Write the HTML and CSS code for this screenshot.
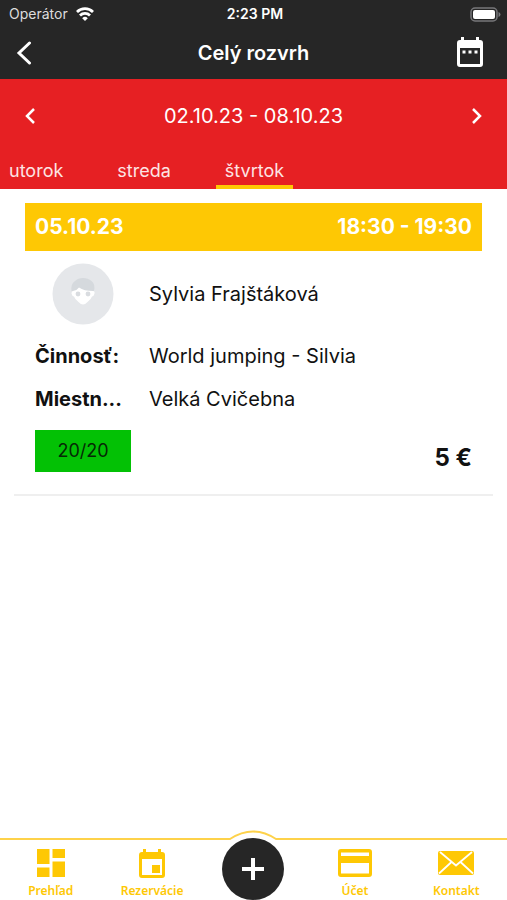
FILE: index.html
```html
<!DOCTYPE html>
<html lang="sk">
<head>
    <meta charset="UTF-8">
    <meta name="viewport" content="width=device-width, initial-scale=1.0">
    <title>Celý rozvrh</title>
    <link rel="stylesheet" href="styles.css">
</head>
<body>
    <!-- Status bar -->
    <div class="status-bar">
        <div class="carrier">
            <span>Operátor</span>
            <svg width="18" height="14" viewBox="0 0 18 14" fill="none" stroke="#fff" stroke-width="2.8">
                <path d="M1 4.9a11.5 11.5 0 0 1 16 0"/>
                <path d="M4 8.4a7.2 7.2 0 0 1 10 0"/>
                <path d="M9 14L6.2 11.2a4 4 0 0 1 5.6 0z" fill="#fff" stroke="none"/>
            </svg>
        </div>
        <span class="clock">2:23 PM</span>
        <svg class="battery" width="31" height="15" viewBox="0 0 31 15">
            <rect x="1" y="1" width="26" height="13" rx="4" fill="#262626" stroke="#77777a" stroke-width="1.5"/>
            <rect x="3" y="3" width="22" height="9" rx="2" fill="#fff"/>
            <path d="M28.5 5v5q2-.8 2-2.5t-2-2.5z" fill="#77777a"/>
        </svg>
    </div>

    <!-- Header -->
    <header class="header">
        <button class="icon-btn" aria-label="Späť">
            <svg width="16" height="24" viewBox="0 0 16 24" fill="none" stroke="#fff" stroke-width="3" stroke-linecap="round">
                <path d="M13.5 2L3 12l10.5 10"/>
            </svg>
        </button>
        <h1>Celý rozvrh</h1>
        <button class="icon-btn calendar-btn" aria-label="Kalendár">
            <svg width="28" height="31" viewBox="0 0 28 31">
                <path fill="#fff" fill-rule="evenodd" d="M5 0h3v3h12V0h3v3h1q3 0 3 3v21q0 3-3 3H4q-3 0-3-3V6q0-3 3-3h1zM4 11v16h20V11z"/>
                <path fill="#fff" d="M6.5 13.5h3v3h-3zM12.500 13.5h3v3h-3zM18.5 13.5h3v3h-3z"/>
            </svg>
        </button>
    </header>

    <!-- Week and day selection -->
    <section class="week">
        <div class="week-range">
            <button class="icon-btn" aria-label="Predchádzajúci týždeň">
                <svg width="12" height="18" viewBox="0 0 12 18" fill="none" stroke="#fff" stroke-width="2.5">
                    <path d="M10 2L3 9l7 7"/>
                </svg>
            </button>
            <span>02.10.23 - 08.10.23</span>
            <button class="icon-btn" aria-label="Nasledujúci týždeň">
                <svg width="12" height="18" viewBox="0 0 12 18" fill="none" stroke="#fff" stroke-width="2.5">
                    <path d="M2 2l7 7-7 7"/>
                </svg>
            </button>
        </div>
        <nav class="days">
            <a href="#utorok">utorok</a>
            <a href="#streda">streda</a>
            <a href="#stvrtok" class="active">štvrtok</a>
        </nav>
    </section>

    <!-- Lessons -->
    <main class="lessons">
        <article class="lesson">
            <div class="lesson-time">
                <span>05.10.23</span>
                <span>18:30 - 19:30</span>
            </div>
            <div class="lesson-info">
                <svg class="avatar" width="62" height="62" viewBox="0 0 62 62">
                    <circle cx="31" cy="31" r="30.5" fill="#e5e7ea"/>
                    <path d="M19.5 28q-1-7 3.5-10 3-3 8-3t8.5 3q4 3 2.5 10z" fill="#d5d9dd"/>
                    <path d="M21 28q4-.5 6-3.5 5 3.5 14 3.5 2 0 1.5 2.5-.5 2.5-2.5 3-1 3-4.5 5.5-2.5 2.5-4.5 2.5t-4.5-2.5q-3.500-2.5-4.5-5.5-2-.5-2.5-3 0-2.5 1.5-2.5z" fill="#fff"/>
                    <circle cx="26" cy="31" r="2.4" fill="#d9dce0"/>
                    <circle cx="36" cy="31" r="2.4" fill="#d9dce0"/>
                </svg>
                <span>Sylvia Frajštáková</span>
            </div>
            <div class="lesson-info">
                <strong>Činnosť:</strong>
                <span>World jumping - Silvia</span>
            </div>
            <div class="lesson-info">
                <strong>Miestn...</strong>
                <span>Velká Cvičebna</span>
            </div>
            <div class="lesson-footer">
                <span class="capacity">20/20</span>
                <strong class="price">5 €</strong>
            </div>
        </article>
    </main>

    <!-- Bottom navigation -->
    <nav class="bottom-nav">
        <a href="#prehlad">
            <svg width="28" height="28" viewBox="0 0 28 28" fill="#fec804">
                <path d="M0 0h12.5v15H0zM15.5 0H28v9H15.500zM0 18.5h12.5V28H0zM15.5 12.5H28V28H15.500z"/>
            </svg>
            <span>Prehľad</span>
        </a>
        <a href="#rezervacie">
            <svg width="28" height="30" viewBox="0 0 28 30" fill="#fec804">
                <path fill-rule="evenodd" d="M5 0h3v3h12V0h3v3h1q3 0 3 3v20q0 3-3 3H4q-3 0-3-3V6q0-3 3-3h1zM4 10v16h20V10z"/>
                <path d="M14 16h8v8h-8z"/>
            </svg>
            <span>Rezervácie</span>
        </a>
        <div class="add">
            <svg class="add-arc" width="62" height="12" viewBox="0 0 62 12">
                <path d="M4 12V9h4Q31-6 54 9h4v3z" fill="#fff"/>
                <path d="M0 9h8Q31-6 54 9h8" fill="none" stroke="#fed24a" stroke-width="2"/>
            </svg>
            <button class="add-btn" aria-label="Pridať">
                <svg width="24" height="24" viewBox="0 0 24 24" stroke="#fff" stroke-width="4">
                    <path d="M12 1v22M1 12h22"/>
                </svg>
            </button>
        </div>
        <a href="#ucet">
            <svg width="34" height="28" viewBox="0 0 34 28" fill="#fec804">
                <path fill-rule="evenodd" d="M3 0h28q3 0 3 3v22q0 3-3 3H3q-3 0-3-3V3q0-3 3-3zM3 3.5v3.5h28V3.5zM3 14v10.5h28V14z"/>
            </svg>
            <span>Účet</span>
        </a>
        <a href="#kontakt">
            <svg width="38" height="28" viewBox="0 0 38 28">
                <rect x="1" y="2" width="36" height="24" rx="2" fill="#fec804"/>
                <path d="M3 3l16 13.5L35 3M2 24.5l12.5-11.5M36 24.5L23.5 13" fill="none" stroke="#fff" stroke-width="1.8"/>
            </svg>
            <span>Kontakt</span>
        </a>
    </nav>
</body>
</html>
```
FILE: styles.css
```css
/* Global Styles */
* {
    box-sizing: border-box;
}

body {
    font-family: Inter, 'Liberation Sans', sans-serif;
    font-size: 20px;
    line-height: 24px;
    margin: 0;
    min-height: 100vh;
    display: flex;
    flex-direction: column;
    background-color: #fff;
    color: #111;
}

a {
    text-decoration: none;
}

svg {
    display: block;
}

.icon-btn {
    padding: 0;
    border: none;
    background: none;
    cursor: pointer;
}

/* Status bar */
.status-bar {
    display: grid;
    grid-template-columns: 1fr auto 1fr;
    align-items: center;
    height: 28px;
    padding: 0 6px 0 9px;
    background-color: #262626;
    color: #fff;
    font-size: 14px;
}

.carrier {
    display: flex;
    align-items: center;
    gap: 8px;
    color: #ddd;
}

.clock {
    font-weight: 600;
}

.battery {
    justify-self: end;
}

/* Header */
.header {
    display: grid;
    grid-template-columns: 1fr auto 1fr;
    align-items: center;
    height: 51px;
    padding: 0 16px 2px;
    background-color: #262626;
    color: #fff;
}

.header .icon-btn {
    justify-self: start;
}

.header .calendar-btn {
    justify-self: end;
    margin-right: 7px;
}

.header h1 {
    margin: 0;
    font-size: 20px;
    font-weight: 600;
}

/* Week selection */
.week {
    background-color: #e62023;
    color: #fff;
}

.week-range {
    display: flex;
    justify-content: space-between;
    align-items: center;
    height: 74px;
    padding: 0 24px;
}

.days {
    display: flex;
    gap: 36px;
}

.days a {
    height: 36px;
    padding: 6px 9px 0;
    border-bottom: 4px solid transparent;
    color: #fde4e4;
    font-size: 18px;
}

.days a.active {
    border-bottom-color: #fec804;
}

/* Lessons */
.lessons {
    flex: 1;
    padding: 14px;
}

.lesson {
    padding: 0 11px 22px;
    border-bottom: 2px solid #efefef;
}

.lesson-time {
    display: flex;
    justify-content: space-between;
    align-items: center;
    height: 48px;
    margin-bottom: 12px;
    padding: 0 10px;
    background-color: #fec804;
    color: #fff;
    font-size: 21px;
    font-weight: 700;
}

.lesson-info {
    display: grid;
    grid-template-columns: 96px 1fr;
    column-gap: 18px;
    align-items: center;
    min-height: 24px;
    margin-bottom: 19px;
    padding: 0 10px;
}

.lesson-info strong {
    font-weight: 700;
}

.avatar {
    justify-self: center;
}

.lesson-footer {
    display: flex;
    justify-content: space-between;
    align-items: center;
    padding: 0 10px;
}

.capacity {
    width: 96px;
    padding: 9px 0;
    background-color: #03c105;
    color: #062a06;
    font-size: 18px;
    text-align: center;
}

.price {
    padding-top: 14px;
    font-size: 24px;
    font-weight: 700;
}

/* Bottom navigation */
.bottom-nav {
    display: grid;
    grid-template-columns: repeat(5, 1fr);
    height: 62px;
    border-top: 2px solid #fed24a;
}

.bottom-nav a {
    display: flex;
    flex-direction: column;
    align-items: center;
    justify-content: space-between;
    padding: 9px 0 1px;
    color: #fec804;
    font-family: 'Noto Sans', sans-serif;
    font-size: 12px;
    line-height: 16px;
    font-weight: 600;
}

.add {
    position: relative;
    display: flex;
    justify-content: center;
}

.add-arc {
    position: absolute;
    top: -10px;
}

.add-btn {
    position: absolute;
    top: -2px;
    display: flex;
    align-items: center;
    justify-content: center;
    width: 62px;
    height: 62px;
    padding: 0;
    border: none;
    border-radius: 50%;
    background-color: #262626;
    cursor: pointer;
}
```
